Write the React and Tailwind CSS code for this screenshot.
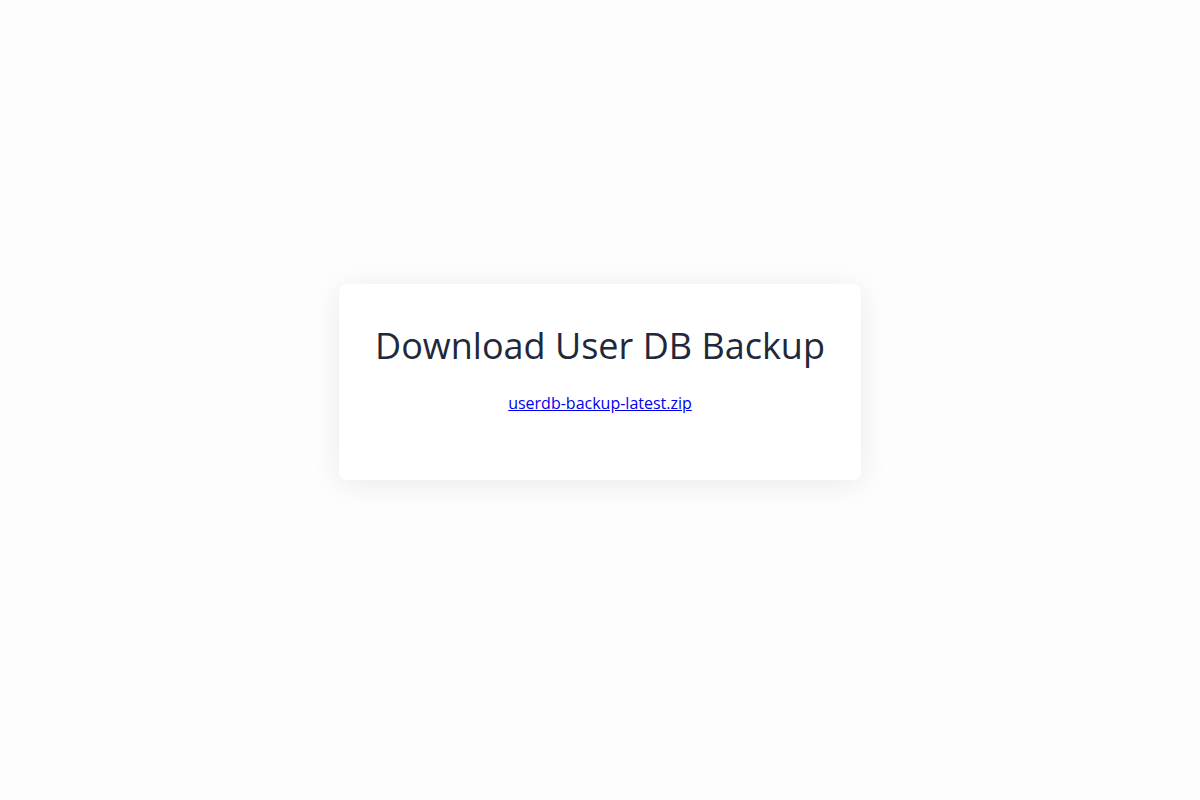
export default function App() {
  return (
    <div className="min-h-screen bg-[#fdfdfd] flex flex-col items-center pt-[284px] font-['Open_Sans',sans-serif]">
      <div className="w-[522px] h-[196px] bg-white rounded-lg shadow-[0_4px_30px_rgba(0,0,0,0.08)] flex flex-col items-center pt-[38px]">
        <h1 className="text-[36px] leading-[48px] text-[#1e293b]">Download User DB Backup</h1>
        <a href="#" className="mt-[21px] text-base leading-6 text-[#0000ee] underline">
          userdb-backup-latest.zip
        </a>
      </div>
    </div>
  );
}
